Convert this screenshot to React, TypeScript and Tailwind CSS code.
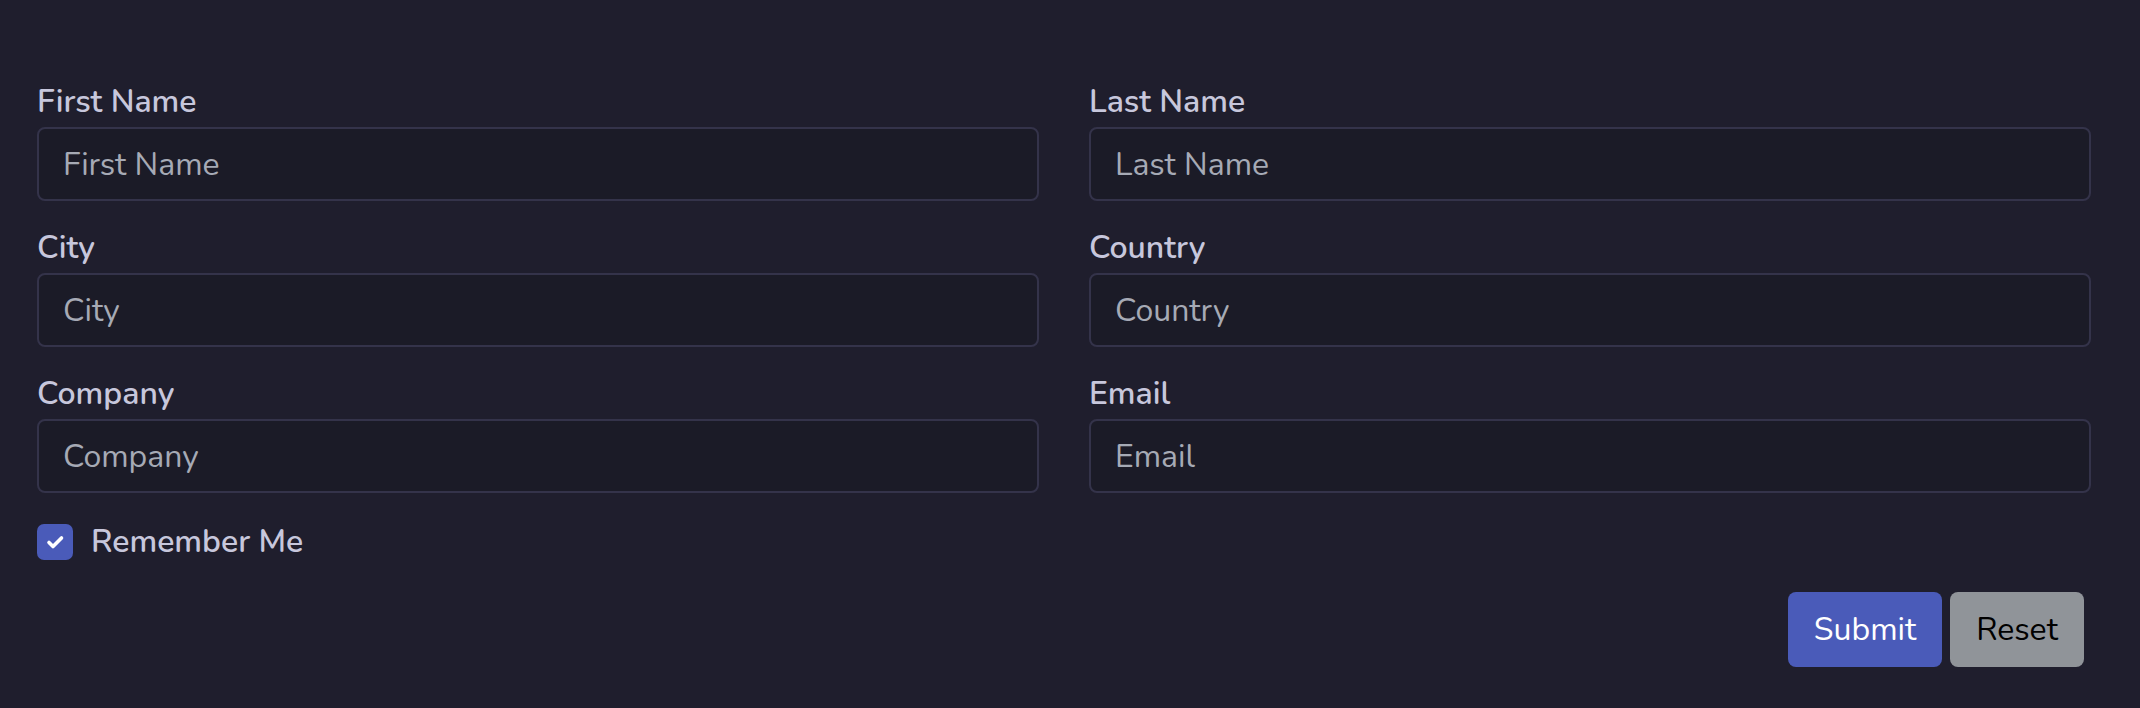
import { useState } from "react"

const fields = [
  ["First Name", "Last Name"],
  ["City", "Country"],
  ["Company", "Email"],
]

const Field = ({ label }: { label: string }) => (
  <div className="flex flex-col">
    <label className="mb-[2px] h-[48px] text-[32px] leading-[50px] font-semibold text-[#c7c7dc]">
      {label}
    </label>
    <input
      type="text"
      placeholder={label}
      className="h-[74px] w-full rounded-[8px] border-2 border-[#34334a] bg-[#1b1b27] px-[24px] text-[32px] text-[#c7c7dc] outline-none placeholder:text-[#a6aab5]"
    />
  </div>
)

const App = () => {
  const [remember, setRemember] = useState(true)

  return (
    <div
      className="min-h-screen bg-[#1f1e2d] pt-[77px] pr-[49px] pl-[37px]"
      style={{ fontFamily: "Nunito, Lato, 'Noto Sans', sans-serif" }}
    >
      <form className="flex flex-col" onSubmit={(e) => e.preventDefault()}>
        <div className="grid grid-cols-2 gap-x-[50px] gap-y-[22px]">
          {fields.map(([a, b]) => (
            <div key={a} className="contents">
              <Field label={a} />
              <Field label={b} />
            </div>
          ))}
        </div>

        {/* remember me */}
        <label className="mt-[25px] flex h-[48px] items-center gap-[18px]">
          <button
            type="button"
            onClick={() => setRemember(!remember)}
            className="flex h-[36px] w-[36px] items-center justify-center rounded-[7px] bg-[#4a5bb9]"
          >
            {remember && (
              <svg viewBox="0 0 36 36" className="h-[36px] w-[36px]">
                <path
                  d="M12 18.5 L16 22.5 L24.5 14"
                  fill="none"
                  stroke="#ffffff"
                  strokeWidth="3.6"
                  strokeLinecap="round"
                  strokeLinejoin="round"
                />
              </svg>
            )}
          </button>
          <span className="text-[32px] leading-[48px] font-semibold text-[#c7c7dc]">Remember Me</span>
        </label>

        <div className="mt-[26px] flex justify-end gap-[8px] pr-[7px]">
          <button
            type="submit"
            className="h-[75px] w-[154px] rounded-[8px] bg-[#4a5bb9] text-[32px] text-white"
          >
            Submit
          </button>
          <button
            type="reset"
            className="h-[75px] w-[134px] rounded-[8px] bg-[#909499] text-[32px] text-black"
          >
            Reset
          </button>
        </div>
      </form>
    </div>
  )
}

export default App
